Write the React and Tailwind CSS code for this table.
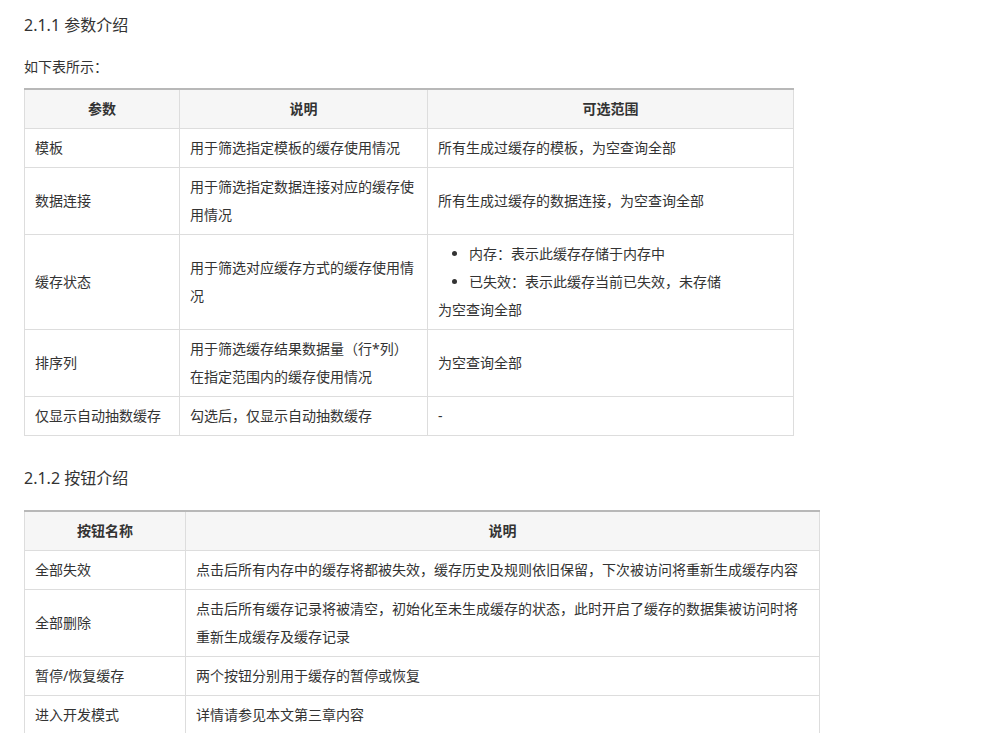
import React from 'react';

const font = { fontFamily: '"Noto Sans", "Noto Sans CJK SC", sans-serif' };

const params = [
  { name: '模板', desc: '用于筛选指定模板的缓存使用情况', range: '所有生成过缓存的模板，为空查询全部' },
  { name: '数据连接', desc: '用于筛选指定数据连接对应的缓存使用情况', range: '所有生成过缓存的数据连接，为空查询全部' },
  {
    name: '缓存状态',
    desc: '用于筛选对应缓存方式的缓存使用情况',
    list: ['内存：表示此缓存存储于内存中', '已失效：表示此缓存当前已失效，未存储'],
    range: '为空查询全部',
  },
  { name: '排序列', desc: '用于筛选缓存结果数据量（行*列）在指定范围内的缓存使用情况', range: '为空查询全部' },
  { name: '仅显示自动抽数缓存', desc: '勾选后，仅显示自动抽数缓存', range: '-' },
];

const buttons = [
  { name: '全部失效', desc: '点击后所有内存中的缓存将都被失效，缓存历史及规则依旧保留，下次被访问将重新生成缓存内容' },
  { name: '全部删除', desc: '点击后所有缓存记录将被清空，初始化至未生成缓存的状态，此时开启了缓存的数据集被访问时将重新生成缓存及缓存记录' },
  { name: '暂停/恢复缓存', desc: '两个按钮分别用于缓存的暂停或恢复' },
  { name: '进入开发模式', desc: '详情请参见本文第三章内容' },
];

const th = 'border border-[#dddddd] border-t-2 border-t-[#b8b8b8] bg-[#f6f6f6] px-[10px] py-[5px] text-center font-bold';
const td = 'border border-[#dddddd] px-[10px] py-[5px] align-middle text-left';

export default function App() {
  return (
    <div className="min-h-screen bg-white pl-[24px] pt-[13px] text-[#333333]" style={font}>
      <h3 className="text-[16px] leading-[24px]">2.1.1 参数介绍</h3>
      <p className="mt-[16px] text-[14px] leading-[28px]">如下表所示：</p>

      {/* 参数表 */}
      <table className="mt-[7px] w-[769px] table-fixed border-collapse text-[14px] leading-[28px]">
        <colgroup>
          <col className="w-[155px]" />
          <col className="w-[248px]" />
          <col className="w-[366px]" />
        </colgroup>
        <thead>
          <tr>
            <th className={th}>参数</th>
            <th className={th}>说明</th>
            <th className={th}>可选范围</th>
          </tr>
        </thead>
        <tbody>
          {params.map((row, i) => (
            <tr key={i}>
              <td className={td}>{row.name}</td>
              <td className={td}>{row.desc}</td>
              <td className={td}>
                {row.list && (
                  <ul className="list-disc pl-[31px] marker:text-[#333333]">
                    {row.list.map((item, j) => (
                      <li key={j}>{item}</li>
                    ))}
                  </ul>
                )}
                <p>{row.range}</p>
              </td>
            </tr>
          ))}
        </tbody>
      </table>

      <h3 className="mt-[30px] text-[16px] leading-[24px]">2.1.2 按钮介绍</h3>

      {/* 按钮表 */}
      <table className="mt-[20px] w-[795px] table-fixed border-collapse text-[14px] leading-[28px]">
        <colgroup>
          <col className="w-[161px]" />
          <col className="w-[634px]" />
        </colgroup>
        <thead>
          <tr>
            <th className={th}>按钮名称</th>
            <th className={th}>说明</th>
          </tr>
        </thead>
        <tbody>
          {buttons.map((row, i) => (
            <tr key={i}>
              <td className={td}>{row.name}</td>
              <td className={td}>{row.desc}</td>
            </tr>
          ))}
        </tbody>
      </table>
    </div>
  );
}
